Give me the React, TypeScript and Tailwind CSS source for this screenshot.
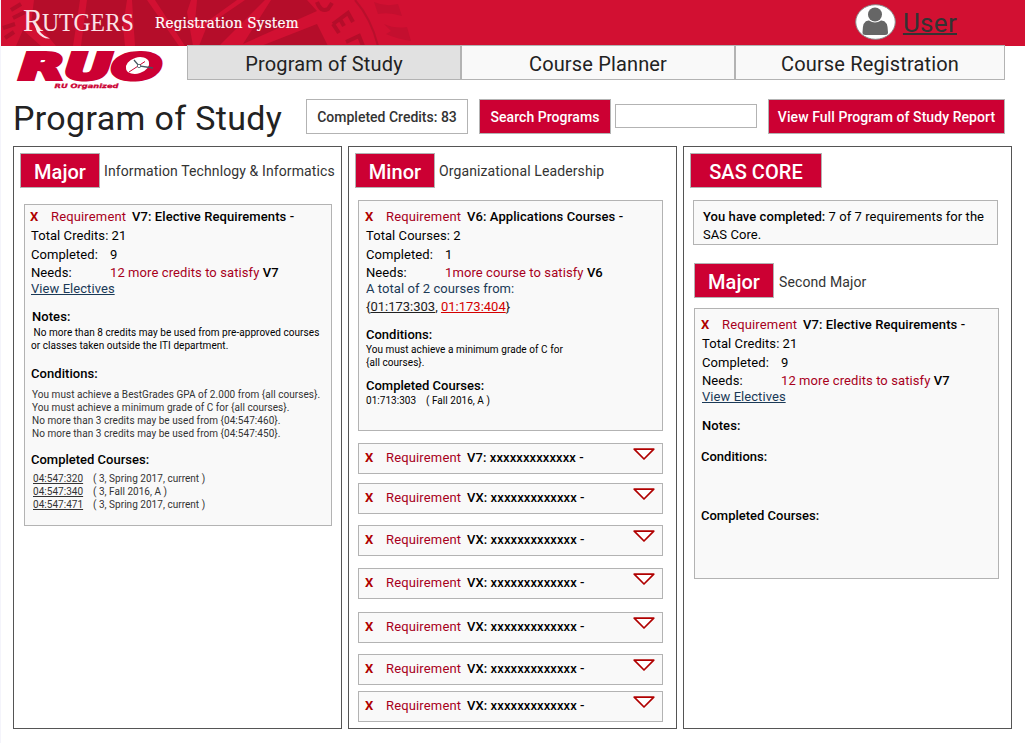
import type { ReactNode } from "react";

function Crest() {
  return (
    <svg className="absolute inset-0" width="430" height="46" viewBox="0 0 430 46" aria-hidden="true">
      <g fill="#b50d2a">
        <path d="M33 0H79L72 46H55L40 28L30 24Z" />
        <path d="M22 30L40 46H15Z" />
        <path d="M86 0H126L122 26L124 46H80Z" />
        <path d="M131 0H146L178 46H134Z" />
        <path d="M154 0H190L186 12L192 46H184Z" />
        <path d="M196 0H236L204 23L194 22Z" />
        <path d="M244 0H264L218 46H198L206 26Z" />
        <path d="M270 0H306L316 11L242 44Z" />
        <path d="M260 46L316 24L327 46Z" />
      </g>
      <g fill="none" stroke="#b50d2a" strokeWidth="4">
        <path d="M316 2Q320 13 327 9L331 3" />
        <path d="M332 24L347 13L352 22M339 19L343 26M332 24L338 33" />
        <path d="M345 42L358 36L362 46" />
        <path d="M2 28L14 24M4 38L13 32M10 10L20 4M12 18L24 12" />
      </g>
      <path d="M354 0Q370 18 377 46" fill="none" stroke="#b90f2c" strokeWidth="2" />
      <g fill="#c40f2f">
        <path d="M373 2Q384 7 397 4L401 16Q388 12 377 14Z" />
        <path d="M383 24Q394 29 406 27L410 41Q396 39 385 34L390 31Z" />
      </g>
    </svg>
  );
}

function RutgersMark() {
  return (
    <svg className="absolute left-0 top-0" width="150" height="46" viewBox="0 0 150 46">
      <g fill="#fbe3e7" fontFamily="'Liberation Serif', serif">
        <text x="22" y="30.500" fontSize="31" textLength="20" lengthAdjust="spacingAndGlyphs">R</text>
        <text x="41" y="30.500" fontSize="25.500" textLength="92" lengthAdjust="spacingAndGlyphs">UTGERS</text>
      </g>
      <path d="M32 20Q39 36 49 38.500Q42 39.500 36 32Z" fill="#fbe3e7" />
    </svg>
  );
}

function RuoLogo() {
  return (
    <svg className="shrink-0 overflow-visible" width="186" height="50" viewBox="1 45 186 50">
      <text x="19.500" y="78.800" fontSize="36" fontWeight="bold" fontStyle="italic" fontFamily="'DejaVu Sans', sans-serif" fill="#cc0033" stroke="#cc0033" strokeWidth="4" textLength="142" lengthAdjust="spacingAndGlyphs">RUO</text>
      <ellipse cx="137.500" cy="65.500" rx="12" ry="8" fill="#fff" transform="rotate(-18 137.500 65.500)" />
      <path d="M129 72L145 61.500" stroke="#cc0033" strokeWidth="1" />
      <path d="M134 60L139 66L153 68" fill="none" stroke="#455560" strokeWidth="1.300" />
      <circle cx="139" cy="66" r="1.700" fill="#fff" stroke="#455560" strokeWidth=".8" />
      <text x="54.500" y="88" fontSize="6" fontWeight="bold" fontStyle="italic" fontFamily="'DejaVu Sans', sans-serif" fill="#cc0033" stroke="#cc0033" strokeWidth=".3" textLength="64" lengthAdjust="spacingAndGlyphs">RU Organized</text>
    </svg>
  );
}

function Avatar() {
  return (
    <svg width="41" height="36" viewBox="0 0 41 36" aria-hidden="true">
      <ellipse cx="20.500" cy="18" rx="19.800" ry="17.300" fill="#fff" stroke="#888" strokeWidth="1" />
      <ellipse cx="20" cy="10.500" rx="7" ry="7" fill="#666" />
      <path d="M7.500 28.500Q7.500 16 14 16.500Q20 20.500 26 16.500Q33 16 33 28.500Q33 31 30 31H10.500Q7.500 31 7.500 28.500Z" fill="#666" />
    </svg>
  );
}

function Tag({ children, className }: { children: ReactNode; className: string }) {
  return (
    <div className={`h-[35px] shrink-0 border border-[#b3b3b3] bg-[#cc0033] text-center text-[20px] font-medium leading-[37px] text-white ${className}`}>
      {children}
    </div>
  );
}

function Card({ children, className }: { children: ReactNode; className: string }) {
  return <div className={`w-[305px] border border-[#b3b3b3] bg-[#f9f9f9] text-black ${className}`}>{children}</div>;
}

function Title({ children }: { children: ReactNode }) {
  return (
    <div className="flex h-4 pl-[6px] leading-4">
      <b className="w-[21px] font-bold text-[#b00000]">X</b>
      <span className="w-[81px] tracking-[0.15px] text-[#a8001c]">Requirement</span>
      <b className="font-medium tracking-[0.09px]">{children}</b>
    </div>
  );
}

function Fact({ label, children, className }: { label: string; children: ReactNode; className: string }) {
  return (
    <div className={`flex h-4 pl-[7px] leading-4 ${className}`}>
      <span className="w-[79px]">{label}</span>
      <span className="tracking-[0.09px] text-[#a8001c]">{children}</span>
    </div>
  );
}

function Head({ children, className }: { children: ReactNode; className: string }) {
  return <h3 className={`h-4 font-medium leading-4 ${className}`}>{children}</h3>;
}

function Taken({ code, info, linked }: { code: string; info: string; linked: boolean }) {
  return (
    <div className="flex">
      <span className={linked ? "w-[60px] underline" : "w-[60px]"}>{code}</span>
      <span>{info}</span>
    </div>
  );
}

function Collapsed({ code, className }: { code: string; className: string }) {
  return (
    <Card className={`flex h-[31px] justify-between pt-[6px] ${className}`}>
      <Title>{code}: xxxxxxxxxxxxx -</Title>
      <svg className="-mt-[2px] mr-[7px]" width="22" height="13" viewBox="0 0 22 13">
        <path d="M1.200 1.200H20.800L11 11Z" fill="#fff" stroke="#b00000" strokeWidth="1.700" strokeLinejoin="round" />
      </svg>
    </Card>
  );
}

const collapsed = [
  { code: "V7", gap: "mt-[12px]" },
  { code: "VX", gap: "mt-[9px]" },
  { code: "VX", gap: "mt-[11px]" },
  { code: "VX", gap: "mt-[12px]" },
  { code: "VX", gap: "mt-[13px]" },
  { code: "VX", gap: "mt-[11px]" },
  { code: "VX", gap: "mt-[6px]" },
];

const column = "h-[583px] w-[329px] border border-[#555] bg-white pt-[6px] tracking-[0.06px]";
const subtitle = "text-[14px] leading-[37px] h-[35px] tracking-[0.11px]";
const tab = "border border-[#b3b3b3] text-center text-[20px] leading-[36px] tracking-[0.15px]";

export default function App() {
  return (
    <div className="h-[743px] w-[1025px] overflow-hidden border-l border-[#f4f4fb] bg-white font-['Roboto',sans-serif] text-[13px] text-[#333]">
      <header className="relative flex h-[46px] justify-between bg-[#d21032]">
        <Crest />
        <RutgersMark />
        <h1 className="relative ml-[154px] mt-[13px] font-['DejaVu_Serif_Condensed','DejaVu_Serif',serif] text-[15px] leading-5 tracking-[0.27px] text-white [-webkit-text-stroke:0.2px_white]">
          Registration System
        </h1>
        <div className="relative mr-[68px] flex gap-[7px] pt-[4px]">
          <Avatar />
          <a className="text-[26px] leading-[39px] tracking-[0.3px] underline decoration-2">User</a>
        </div>
      </header>

      <div className="relative -mt-px flex h-[50px] pr-5">
        <RuoLogo />
        <nav className="flex h-[35px] text-[#222]">
          <div className={`w-[274px] bg-[#e1e1e1] ${tab}`}>Program of Study</div>
          <div className={`w-[274px] bg-[#f9f9f9] ${tab}`}>Course Planner</div>
          <div className={`w-[270px] bg-[#f9f9f9] ${tab}`}>Course Registration</div>
        </nav>
      </div>

      <div className="flex h-[51px] pl-[12px] pt-[4px] text-[14px] font-medium leading-[34px]">
        <h2 className="w-[293px] text-[34px] font-normal leading-[38px] tracking-[0.35px] text-[#222]">Program of Study</h2>
        <div className="h-[35px] w-[162px] border border-[#b3b3b3] text-center">Completed Credits: 83</div>
        <button className="ml-[11px] h-[35px] w-[132px] border border-[#b3b3b3] bg-[#cc0033] tracking-[0.05px] text-white">Search Programs</button>
        <input className="ml-[4px] mt-[5px] h-[24px] w-[142px] border border-[#b3b3b3] bg-white" />
        <button className="ml-[11px] h-[35px] w-[237px] whitespace-nowrap border border-[#b3b3b3] bg-[#cc0033] tracking-[0.07px] text-white">View Full Program of Study Report</button>
      </div>

      <main className="flex gap-[6px] pl-[12px]">
        <section className={column}>
          <div className="flex gap-1 pl-[6px]">
            <Tag className="w-[80px]">Major</Tag>
            <span className={`whitespace-nowrap ${subtitle}`}>Information Technlogy &amp; Informatics</span>
          </div>
          <div className="ml-[10px] mt-[16px] h-[322px] w-[308px] border border-[#b3b3b3] bg-[#f9f9f9] pt-[4px] text-black">
            <div className="-ml-px"><Title>V7: Elective Requirements -</Title></div>
            <div className="mt-[3px] h-4 pl-[6px] leading-4">Total Credits: 21</div>
            <div className="mt-[3px] flex h-4 pl-[6px] leading-4"><span className="w-[79px]">Completed:</span>9</div>
            <div className="-ml-px">
              <Fact label="Needs:" className="mt-[2px]">12 more credits to satisfy <b className="font-medium text-black">V7</b></Fact>
            </div>
            <a className="block h-4 pl-[6px] leading-4 text-[#1b3a57] underline">View Electives</a>
            <Head className="mt-[12px] pl-[7px]">Notes:</Head>
            <p className="mt-[1px] whitespace-nowrap pl-[6px] text-[10px] leading-[13px] tracking-[0.05px]">
              &nbsp;No more than 8 credits may be used from pre-approved courses<br />or classes taken outside the ITI department.
            </p>
            <Head className="mt-[14px] pl-[6px]">Conditions:</Head>
            <p className="mt-[6px] whitespace-nowrap pl-[7px] text-[10px] leading-[13px] tracking-[0.05px] text-[#333]">
              You must achieve a BestGrades GPA of 2.000 from {"{all courses}"}.<br />
              You must achieve a minimum grade of C for {"{all courses}"}.<br />
              No more than 3 credits may be used from {"{04:547:460}"}.<br />
              No more than 3 credits may be used from {"{04:547:450}"}.
            </p>
            <Head className="mt-[12px] pl-[6px] tracking-[0]">Completed Courses:</Head>
            <div className="mt-[4px] pl-[8px] text-[10px] leading-[13px] tracking-[0.03px] text-[#333]">
              <Taken linked code="04:547:320" info="( 3, Spring 2017, current )" />
              <Taken linked code="04:547:340" info="( 3, Fall 2016, A )" />
              <Taken linked code="04:547:471" info="( 3, Spring 2017, current )" />
            </div>
          </div>
        </section>

        <section className={column}>
          <div className="flex gap-1 pl-[6px]">
            <Tag className="w-[80px]">Minor</Tag>
            <span className={subtitle}>Organizational Leadership</span>
          </div>
          <Card className="ml-[9px] mt-[12px] h-[231px] pt-[8px]">
            <Title>V6: Applications Courses -</Title>
            <div className="mt-[3px] h-4 pl-[7px] leading-4">Total Courses: 2</div>
            <div className="mt-[3px] flex h-4 pl-[7px] leading-4"><span className="w-[79px]">Completed:</span>1</div>
            <Fact label="Needs:" className="mt-[2px]">1more course to satisfy <b className="font-medium text-black">V6</b></Fact>
            <div className="h-4 pl-[7px] leading-4 text-[#1b3a57]">A total of 2 courses from:</div>
            <div className="mt-[2px] h-4 pl-[7px] leading-4 tracking-[0] text-[#222]">
              {"{"}<u>01:173:303</u>, <u className="text-[#d40000]">01:173:404</u>{"}"}
            </div>
            <Head className="mt-[12px] pl-[7px] tracking-[0]">Conditions:</Head>
            <p className="pl-[7px] text-[10px] leading-[13px] tracking-[0.06px]">You must achieve a minimum grade of C for<br />{"{all courses}"}.</p>
            <Head className="mt-[9px] pl-[7px] tracking-[0]">Completed Courses:</Head>
            <div className="pl-[7px] text-[10px] leading-[13px] tracking-[0.03px]">
              <Taken linked={false} code="01:713:303" info="( Fall 2016, A )" />
            </div>
          </Card>
          {collapsed.map((row, i) => (
            <Collapsed key={i} code={row.code} className={`ml-[9px] ${row.gap}`} />
          ))}
        </section>

        <section className={column}>
          <Tag className="ml-[6px] w-[132px]">SAS CORE</Tag>
          <Card className="ml-[9px] mt-[12px] h-[45px] pl-[9px] pt-[7px] leading-[18px]">
            <b className="font-medium">You have completed:</b> 7 of 7 requirements for the<br />SAS Core.
          </Card>
          <div className="mt-[18px] flex gap-[5px] pl-[10px]">
            <Tag className="w-[80px]">Major</Tag>
            <span className={`pt-px ${subtitle}`}>Second Major</span>
          </div>
          <Card className="ml-[10px] mt-[10px] h-[271px] pt-[8px]">
            <Title>V7: Elective Requirements -</Title>
            <div className="mt-[3px] h-4 pl-[7px] leading-4">Total Credits: 21</div>
            <div className="mt-[3px] flex h-4 pl-[7px] leading-4"><span className="w-[79px]">Completed:</span>9</div>
            <Fact label="Needs:" className="mt-[2px]">12 more credits to satisfy <b className="font-medium text-black">V7</b></Fact>
            <a className="block h-4 pl-[7px] leading-4 text-[#1b3a57] underline">View Electives</a>
            <Head className="mt-[13px] pl-[7px]">Notes:</Head>
            <Head className="mt-[15px] pl-[6px] tracking-[0]">Conditions:</Head>
            <Head className="mt-[43px] pl-[6px] tracking-[0]">Completed Courses:</Head>
          </Card>
        </section>
      </main>
    </div>
  );
}
